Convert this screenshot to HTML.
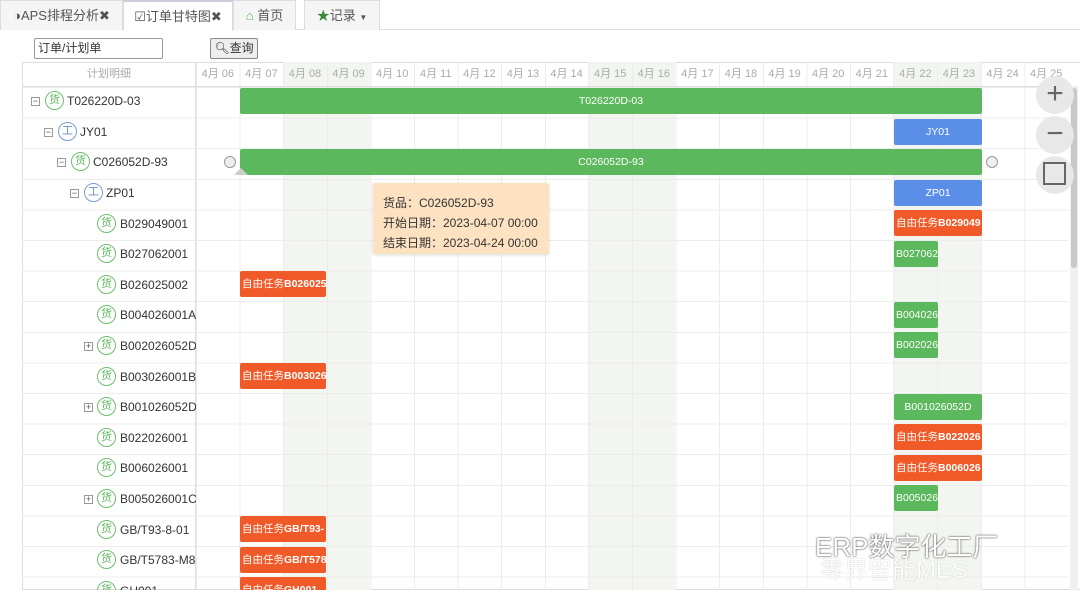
<!DOCTYPE html>
<html><head><meta charset="utf-8"><style>
*{box-sizing:border-box;margin:0;padding:0}
html,body{width:1080px;height:593px;overflow:hidden}
body{background:#fff;font-family:"Liberation Sans","Noto Sans CJK SC",sans-serif;font-size:12px;color:#333;position:relative}
.a{position:absolute}
.tab{position:absolute;top:0;height:30px;border:1px solid #ddd;border-bottom:none;background:#f5f5f5;color:#555;font-size:13px;line-height:30px;text-align:center}
.hd{position:absolute;top:62px;height:25px;line-height:25px;font-size:11px;color:#aaa;text-align:center;width:43.6px}
.ic{position:absolute;width:19px;height:19px;border-radius:50%;border:1.5px solid #6cbf6c;color:#5cb85c;font-size:11px;text-align:center;line-height:16px}
.ic.w{border-color:#7b9bd3;color:#6b8dc8}
.ex{position:absolute;width:9px;height:9px;border:1px solid #999;font-size:9px;line-height:6px;text-align:center;color:#555}
.tx{position:absolute;font-size:12px}
.bar{position:absolute;height:26px;border-radius:2px;color:#fff;font-size:10.5px;line-height:26px;text-align:center;overflow:hidden;white-space:nowrap}
.g{background:#5cb85c}.b{background:#5b8ee6}.o{background:#f05a28;text-align:left;padding-left:2px}
.o b{font-weight:bold}
.zb{position:absolute;left:1036px;width:38px;height:38px;border-radius:50%;background:#e8e8e8;color:#666;text-align:center}
</style></head><body>
<div class="a" style="left:0;top:29px;width:1080px;height:1px;background:#ddd"></div>
<div class="tab" style="left:0;width:123px">◑APS排程分析✖</div>
<div class="tab" style="left:123px;width:110px;background:#fff;height:31px;border-top:2px solid #ccd">☑订单甘特图✖</div>
<div class="tab" style="left:233px;width:63px"><span style="color:#5cb85c">&#8962;</span> 首页</div>
<div class="tab" style="left:304px;width:76px"><span style="color:#3a8a3a">★</span>记录 <span style="font-size:8px">▼</span></div>
<div class="a" style="left:34px;top:38px;width:129px;height:21px;border:1px solid #999;border-radius:2px;font-size:12px;line-height:19px;padding-left:3px">订单/计划单</div>
<div class="a" style="left:210px;top:38px;width:48px;height:21px;border:1px solid #888;border-radius:2px;background:#eee;font-size:12px;line-height:19px;text-align:center">🔍︎查询</div>
<div class="a" style="left:0;top:62px;width:1080px;height:528px;overflow:hidden">
<div class="a" style="left:22px;top:0;width:1058px;height:528px;border:1px solid #ddd;border-right:none"></div>
<div class="a" style="left:283px;top:0;width:87px;height:528px;background:#f3f6f0"></div>
<div class="a" style="left:588px;top:0;width:87px;height:528px;background:#f3f6f0"></div>
<div class="a" style="left:893px;top:0;width:88px;height:528px;background:#f3f6f0"></div>
<div class="a" style="left:196px;top:0;width:872px;height:528px;background:repeating-linear-gradient(90deg,#ececec 0 1px,transparent 1px 43.6px)"></div>
<div class="a" style="left:22px;top:25px;width:1046px;height:503px;background:repeating-linear-gradient(180deg,#ececec 0 1px,transparent 1px 30.6px)"></div>
<div class="a" style="left:22px;top:24px;width:1046px;height:1px;background:#ddd"></div>
<div class="a" style="left:195px;top:0;width:1px;height:528px;background:#ddd"></div>
<div class="a" style="left:22px;top:0;width:174px;height:25px;line-height:25px;text-align:center;color:#aaa;font-size:11px">计划明细</div>
<div class="hd" style="left:196px;top:0">4月 06</div><div class="hd" style="left:239.6px;top:0">4月 07</div><div class="hd" style="left:283.2px;top:0">4月 08</div><div class="hd" style="left:326.8px;top:0">4月 09</div><div class="hd" style="left:370.4px;top:0">4月 10</div><div class="hd" style="left:414px;top:0">4月 11</div><div class="hd" style="left:457.6px;top:0">4月 12</div><div class="hd" style="left:501.2px;top:0">4月 13</div><div class="hd" style="left:544.8px;top:0">4月 14</div><div class="hd" style="left:588.4px;top:0">4月 15</div><div class="hd" style="left:632px;top:0">4月 16</div><div class="hd" style="left:675.6px;top:0">4月 17</div><div class="hd" style="left:719.2px;top:0">4月 18</div><div class="hd" style="left:762.8px;top:0">4月 19</div><div class="hd" style="left:806.4px;top:0">4月 20</div><div class="hd" style="left:850px;top:0">4月 21</div><div class="hd" style="left:893.6px;top:0">4月 22</div><div class="hd" style="left:937.2px;top:0">4月 23</div><div class="hd" style="left:980.8px;top:0">4月 24</div><div class="hd" style="left:1024.4px;top:0">4月 25</div>
<div class="a" style="left:22px;top:25px;width:174px;height:503px;overflow:hidden">
<div class="ex" style="left:9px;top:10px">−</div><div class="ic" style="left:23px;top:4px">货</div><div class="tx" style="left:45px;top:7px">T026220D-03</div>
<div class="ex" style="left:22px;top:41px">−</div><div class="ic w" style="left:36px;top:35px">工</div><div class="tx" style="left:58px;top:38px">JY01</div>
<div class="ex" style="left:35px;top:71px">−</div><div class="ic" style="left:49px;top:65px">货</div><div class="tx" style="left:71px;top:68px">C026052D-93</div>
<div class="ex" style="left:48px;top:102px">−</div><div class="ic w" style="left:62px;top:96px">工</div><div class="tx" style="left:84px;top:99px">ZP01</div>
<div class="ic" style="left:75px;top:127px">货</div><div class="tx" style="left:98px;top:130px">B029049001</div>
<div class="ic" style="left:75px;top:157px">货</div><div class="tx" style="left:98px;top:160px">B027062001</div>
<div class="ic" style="left:75px;top:188px">货</div><div class="tx" style="left:98px;top:191px">B026025002</div>
<div class="ic" style="left:75px;top:218px">货</div><div class="tx" style="left:98px;top:221px">B004026001A</div>
<div class="ex" style="left:62px;top:255px">+</div><div class="ic" style="left:75px;top:249px">货</div><div class="tx" style="left:98px;top:252px">B002026052D</div>
<div class="ic" style="left:75px;top:280px">货</div><div class="tx" style="left:98px;top:283px">B003026001B</div>
<div class="ex" style="left:62px;top:316px">+</div><div class="ic" style="left:75px;top:310px">货</div><div class="tx" style="left:98px;top:313px">B001026052D</div>
<div class="ic" style="left:75px;top:341px">货</div><div class="tx" style="left:98px;top:344px">B022026001</div>
<div class="ic" style="left:75px;top:371px">货</div><div class="tx" style="left:98px;top:374px">B006026001</div>
<div class="ex" style="left:62px;top:408px">+</div><div class="ic" style="left:75px;top:402px">货</div><div class="tx" style="left:98px;top:405px">B005026001C</div>
<div class="ic" style="left:75px;top:433px">货</div><div class="tx" style="left:98px;top:436px">GB/T93-8-01</div>
<div class="ic" style="left:75px;top:463px">货</div><div class="tx" style="left:98px;top:466px;white-space:nowrap">GB/T5783-M8X</div>
<div class="ic" style="left:75px;top:494px">货</div><div class="tx" style="left:98px;top:497px">GH001-M10X4</div>
</div>
<div class="bar g" style="left:240px;top:26px;width:742px">T026220D-03</div>
<div class="bar b" style="left:894px;top:57px;width:88px">JY01</div>
<div class="bar g" style="left:240px;top:87px;width:742px">C026052D-93</div>
<div class="a" style="left:224px;top:94px;width:12px;height:12px;border:1px solid #999;border-radius:50%;background:#eee"></div>
<div class="a" style="left:986px;top:94px;width:12px;height:12px;border:1px solid #999;border-radius:50%;background:#eee"></div>
<div class="a" style="left:234px;top:106px;width:0;height:0;border-left:7px solid transparent;border-right:7px solid transparent;border-bottom:7px solid #ccc"></div>
<div class="bar b" style="left:894px;top:118px;width:88px">ZP01</div>
<div class="bar o" style="left:894px;top:148px;width:88px">自由任务<b>B029049</b></div>
<div class="bar g" style="left:894px;top:179px;width:44px;text-align:left;padding-left:2px">B027062</div>
<div class="bar o" style="left:240px;top:209px;width:86px">自由任务<b>B026025</b></div>
<div class="bar g" style="left:894px;top:240px;width:44px;text-align:left;padding-left:2px">B004026</div>
<div class="bar g" style="left:894px;top:270px;width:44px;text-align:left;padding-left:2px">B002026</div>
<div class="bar o" style="left:240px;top:301px;width:86px">自由任务<b>B003026</b></div>
<div class="bar g" style="left:894px;top:332px;width:88px">B001026052D</div>
<div class="bar o" style="left:894px;top:362px;width:88px">自由任务<b>B022026</b></div>
<div class="bar o" style="left:894px;top:393px;width:88px">自由任务<b>B006026</b></div>
<div class="bar g" style="left:894px;top:423px;width:44px;text-align:left;padding-left:2px">B005026</div>
<div class="bar o" style="left:240px;top:454px;width:86px">自由任务<b>GB/T93-</b></div>
<div class="bar o" style="left:240px;top:485px;width:86px">自由任务<b>GB/T578</b></div>
<div class="bar o" style="left:240px;top:515px;width:86px">自由任务<b>GH001</b></div>
<div class="a" style="left:1070px;top:24px;width:8px;height:504px;background:#f0f0f0"></div>
<div class="a" style="left:1071px;top:26px;width:6px;height:180px;background:#c8c8c8;border-radius:3px"></div>
</div>
<div class="a" style="left:373px;top:183px;width:176px;height:71px;background:#fde2c2;border-radius:2px;box-shadow:0 1px 3px rgba(0,0,0,.15);padding:10px 10px;font-size:12px;line-height:20px;color:#333">货品：C026052D-93<br>开始日期：2023-04-07 00:00<br>结束日期：2023-04-24 00:00</div>
<div class="zb" style="top:76px;font-size:30px;line-height:36px">+</div>
<div class="zb" style="top:116px;font-size:30px;line-height:36px">−</div>
<div class="zb" style="top:156px"><div class="a" style="left:7px;top:6px;width:23px;height:23px;border:2px solid #666"></div></div>
<div class="a" style="left:815px;top:527px;font-size:26px;color:#fff;text-shadow:0 0 2px #555,0 0 1px #555;white-space:nowrap">ERP数字化工厂</div>
<div class="a" style="left:820px;top:550px;font-size:24px;color:#fff;opacity:.8;text-shadow:0 0 1px #999;white-space:nowrap">零界智能MES</div>
</body></html>
